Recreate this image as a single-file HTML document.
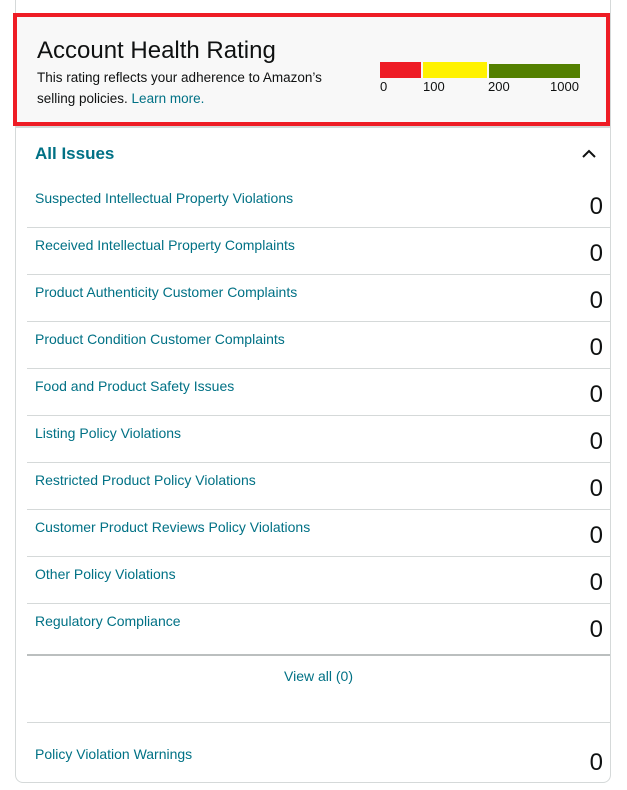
<!DOCTYPE html>
<html><head><meta charset="utf-8"><style>
body{margin:0;background:#fff;font-family:"Liberation Sans",sans-serif;width:627px;height:790px;position:relative;overflow:hidden}
.card{position:absolute;left:15px;top:-10px;width:596px;height:793px;border:1px solid #d5d9d9;border-radius:8px;box-sizing:border-box}
.red{position:absolute;left:13px;top:13px;width:597px;height:113px;border:4px solid #ee1c25;box-sizing:border-box;background:#f8f8f8}
.sep{position:absolute;left:15px;top:126px;width:596px;height:2px;background:#d5d9d9}
h1{position:absolute;left:37px;top:37px;margin:0;font-weight:normal;font-size:24px;color:#0f1111}
.desc{position:absolute;left:37px;top:67px;font-size:13.5px;line-height:21px;color:#0f1111;width:320px}
a{color:#007185;text-decoration:none}
.bar{position:absolute;height:16px}
.lbl{position:absolute;top:79px;font-size:13px;color:#0f1111}
.ai{position:absolute;left:35px;top:144px;font-size:17px;font-weight:bold;color:#007185}
.row{position:absolute;left:27px;width:583px;height:47px;border-bottom:1px solid #d5d9d9}
.row a{position:absolute;left:8px;top:10px;font-size:14px}
.row span{position:absolute;right:7px;top:13px;font-size:24px;color:#0f1111}
</style></head><body>
<div class="card"></div>
<div class="red"></div>
<div class="sep"></div>
<h1>Account Health Rating</h1>
<div class="desc">This rating reflects your adherence to Amazon’s selling policies. <a>Learn more.</a></div>
<div class="bar" style="left:380px;top:62px;width:41px;background:#ee1c25"></div>
<div class="bar" style="left:423px;top:62px;width:64px;background:#fff200"></div>
<div class="bar" style="left:489px;top:64px;width:91px;height:14px;background:#538000"></div>
<div class="lbl" style="left:380px">0</div>
<div class="lbl" style="left:423px">100</div>
<div class="lbl" style="left:488px">200</div>
<div class="lbl" style="left:550px">1000</div>
<div class="ai">All Issues</div>
<svg style="position:absolute;left:581px;top:148px" width="16" height="12"><path d="M2 9 L8 3 L14 9" stroke="#0f1111" stroke-width="2" fill="none"/></svg>
<div class="row" style="top:180px"><a>Suspected Intellectual Property Violations</a><span>0</span></div>
<div class="row" style="top:227px"><a>Received Intellectual Property Complaints</a><span>0</span></div>
<div class="row" style="top:274px"><a>Product Authenticity Customer Complaints</a><span>0</span></div>
<div class="row" style="top:321px"><a>Product Condition Customer Complaints</a><span>0</span></div>
<div class="row" style="top:368px"><a>Food and Product Safety Issues</a><span>0</span></div>
<div class="row" style="top:415px"><a>Listing Policy Violations</a><span>0</span></div>
<div class="row" style="top:462px"><a>Restricted Product Policy Violations</a><span>0</span></div>
<div class="row" style="top:509px"><a>Customer Product Reviews Policy Violations</a><span>0</span></div>
<div class="row" style="top:556px"><a>Other Policy Violations</a><span>0</span></div>
<div class="row" style="top:603px;border-bottom:2px solid #bbbfbf;height:51px"><a>Regulatory Compliance</a><span>0</span></div>
<a style="position:absolute;left:284px;top:668px;font-size:14px">View all (0)</a>
<div style="position:absolute;left:27px;top:722px;width:583px;height:1px;background:#d5d9d9"></div>
<div class="row" style="top:736px;border:none"><a>Policy Violation Warnings</a><span>0</span></div>
</body></html>
